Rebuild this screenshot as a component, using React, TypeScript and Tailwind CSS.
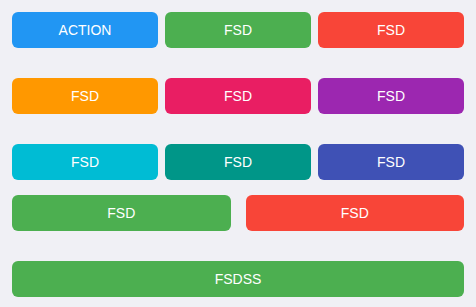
const btn =
  "h-9 rounded-md text-white text-[14px] flex items-center justify-center";

export default function App() {
  return (
    <div
      className="w-[476px] h-[307px] bg-[#f0f0f5] p-3 flex flex-col"
      style={{ fontFamily: '"Liberation Sans", Arial, sans-serif' }}
    >
      <div className="grid grid-cols-3 gap-[7px]">
        <button className={`${btn} bg-[#2196f3]`}>ACTION</button>
        <button className={`${btn} bg-[#4caf50]`}>FSD</button>
        <button className={`${btn} bg-[#f84538]`}>FSD</button>
      </div>
      <div className="grid grid-cols-3 gap-[7px] mt-[30px]">
        <button className={`${btn} bg-[#ff9800]`}>FSD</button>
        <button className={`${btn} bg-[#e91e63]`}>FSD</button>
        <button className={`${btn} bg-[#9c27b0]`}>FSD</button>
      </div>
      <div className="grid grid-cols-3 gap-[7px] mt-[30px]">
        <button className={`${btn} bg-[#00bcd4]`}>FSD</button>
        <button className={`${btn} bg-[#009688]`}>FSD</button>
        <button className={`${btn} bg-[#3f51b5]`}>FSD</button>
      </div>
      <div className="grid grid-cols-2 gap-[15px] mt-[15px]">
        <button className={`${btn} bg-[#4caf50]`}>FSD</button>
        <button className={`${btn} bg-[#f84538]`}>FSD</button>
      </div>
      <div className="mt-[30px]">
        <button className={`${btn} w-full bg-[#4caf50]`}>FSDSS</button>
      </div>
    </div>
  );
}
